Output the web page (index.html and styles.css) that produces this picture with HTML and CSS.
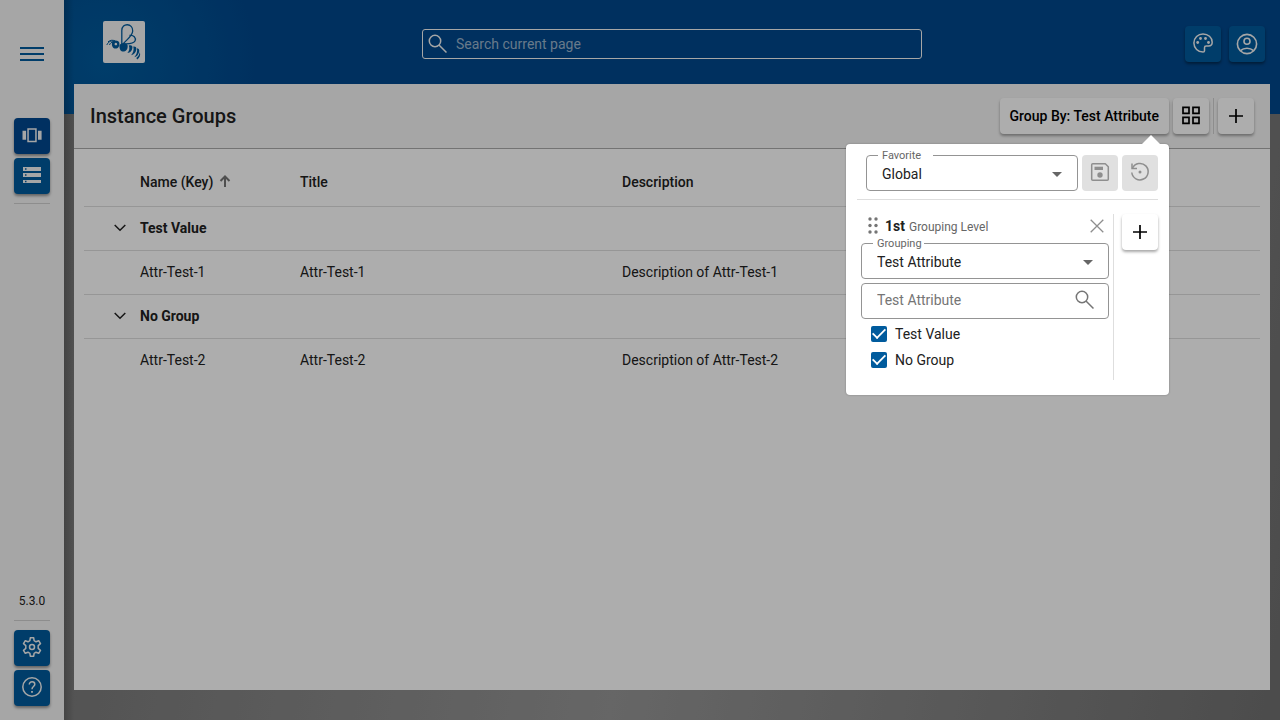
FILE: index.html
```html
<!DOCTYPE html>
<html lang="en">
<head>
<meta charset="utf-8">
<meta name="viewport" content="width=device-width, initial-scale=1">
<title>Instance Groups</title>
<link rel="stylesheet" href="styles.css">
</head>
<body>
<div class="app">
  <nav class="rail">
    <button class="menu" aria-label="Menu"><span></span><span></span><span></span></button>
    <div class="rail-group rail-top">
      <button class="tile tile-active" aria-label="Instance groups"><svg width="24" height="24" viewBox="0 0 24 24"><path fill="currentColor" fill-rule="evenodd" d="M2.500 7.700h3.600v9H2.500zM18 7.700h3.600v9H18zM7.300 5.200h9.400v14H7.300zM8.800 6.700v11h6.400v-11z"/></svg></button>
      <button class="tile" aria-label="Systems"><svg width="24" height="24" viewBox="0 0 24 24"><path fill="currentColor" fill-rule="evenodd" d="M3 4h18v4H3zM5 5.300v1.500h1.500V5.300zM3 10h18v4H3zM5 11.300v1.500h1.500v-1.500zM3 17h18v3H3zM5 17.800v1.400h1.500v-1.400z"/></svg></button>
    </div>
    <span class="version">5.3.0</span>
    <div class="rail-group rail-bottom">
      <button class="tile" aria-label="Settings"><svg width="24" height="24" viewBox="0 0 24 24" fill="none" stroke="currentColor" stroke-width="1.500" stroke-linejoin="round"><path d="M10.300 2.800h3.400l.4 2.900 1.900 1.100 2.700-1.100 1.800 3-2.300 1.900v2.800l2.300 1.900-1.800 3-2.700-1.100-1.900 1.100-.4 2.900h-3.400l-.4-2.900L8 17.200l-2.700 1.100-1.800-3 2.300-1.900v-2.800L3.500 8.700l1.800-3L8 6.800l1.900-1.100z"/><circle cx="12" cy="12" r="2.500"/></svg></button>
      <button class="tile" aria-label="Help"><svg width="24" height="24" viewBox="0 0 24 24" fill="none" stroke="currentColor" stroke-width="1.500"><circle cx="12" cy="12" r="9.200"/><path d="M9.300 9.600c0-1.800 1.200-2.900 2.800-2.900s2.700 1 2.700 2.500c0 2.300-2.800 2.300-2.800 5"/><path stroke-width="1.800" d="M12 16v1.800"/></svg></button>
    </div>
  </nav>

  <div class="shell">
    <header class="topbar">
      <svg class="logo" viewBox="0 0 42 42" width="42" height="42"><rect width="42" height="42" rx="2" fill="#f5f5f5"/><g fill="none" stroke="#005b9d" stroke-width="1.300"><path d="M18.800 24V9.500C18.800 1.500 30 2 29.700 10c-.2 5-5.500 8-9.700 13"/><path d="M26.500 14.500c4-1 7 2.500 5.500 5.500-1.500 3-7 2.700-11 3"/><path stroke-width="1" d="M3.800 24c1.500-3.300 4-4.600 7.500-3.600M6.500 24c.5-1.800 2-3 4-2.800M5 20.800c2-1.600 4.500-2 7-1"/></g><g fill="#005b9d"><path fill-rule="evenodd" d="M9.500 20.500c2.500-1.600 6-1.200 6.800 1.200.6 3.300-1.300 6-3.800 5.900C9.500 27.500 8 24 9.500 20.500zm3.300 1.200a1.300 1.300 0 1 0 .1 0z"/><path d="M16.500 24c1.500-2.500 7-2.500 8 0 .7 3-.8 6-3.500 6.500s-5-1.700-4.500-6.500z"/><path d="M25.800 24.500c2.600-.6 4 .2 3.600 2.500-.5 3-2 4.500-5 5 2-2.500 2.500-4.600 1.400-7.500zM30.300 25.500c2.500-.2 3.500 1 3 3.300-.6 2.900-2.200 4.700-5.200 5.500 2.200-2.700 3-5.300 2.200-8.800zM34 27.300c2 .5 2.700 1.700 2.100 3.800-.7 2.700-2.200 4.600-4.800 5.200 2.200-2.500 3.200-5.300 2.700-9zM36.800 31c1 3-.1 6-2.500 7.500l-1-1.500c1.900-1.500 3-3.300 3.500-6z"/></g></svg>
      <label class="search"><svg width="24" height="24" viewBox="0 0 24 24" fill="none" stroke="currentColor" stroke-width="1.500"><circle cx="9" cy="9" r="5.700"/><path d="M13 13l7.500 7.500"/></svg><input type="search" placeholder="Search current page" aria-label="Search current page"></label>
      <div class="top-actions">
        <button class="tile" aria-label="Theme"><svg width="24" height="24" viewBox="0 0 24 24"><path fill="none" stroke="currentColor" stroke-width="1.500" d="M12 2.900a9.100 9.100 0 1 0 0 18.200c1.200 0 1.500-.6 1.500-1.300v-3.100c0-1 .7-1.700 1.700-1.700h2.400c2.300 0 3.600-1.500 3.600-3.700 0-4.900-4.100-8.400-9.200-8.400z"/><g fill="currentColor"><circle cx="6.700" cy="11.500" r="1.400"/><circle cx="9.500" cy="7.500" r="1.400"/><circle cx="14.500" cy="7.500" r="1.400"/><circle cx="17.500" cy="11.500" r="1.400"/></g></svg></button>
        <button class="tile" aria-label="Account"><svg width="24" height="24" viewBox="0 0 24 24" fill="none" stroke="currentColor" stroke-width="1.600"><circle cx="12" cy="13" r="9.600"/><circle cx="12" cy="10.200" r="3"/><path d="M5.500 19.700c3.500-3.300 9.500-3.300 13 0"/></svg></button>
      </div>
    </header>

    <main class="page">
      <div class="page-head">
        <h1>Instance Groups</h1>
        <div class="page-actions">
          <div class="group-anchor">
            <button class="raised group-by">Group By: Test Attribute</button>
            <section class="popover" aria-label="Grouping">
              <div class="fav-row">
                <fieldset class="field"><legend><label for="fav">Favorite</label></legend><select id="fav"><option>Global</option></select></fieldset>
                <button class="square" disabled aria-label="Save"><svg width="24" height="24" viewBox="0 0 24 24"><path fill="none" stroke="currentColor" stroke-width="1.500" stroke-linejoin="round" d="M4.700 3.700h12.600l3 3v12.600q0 1-1 1H4.700q-1 0-1-1V4.700q0-1 1-1z"/><path fill="currentColor" d="M6.500 6.700h8.500v3.300H6.500z"/><circle cx="12" cy="15" r="2.700" fill="currentColor"/></svg></button>
                <button class="square" disabled aria-label="Restore"><svg width="24" height="24" viewBox="0 0 24 24" fill="none" stroke="currentColor" stroke-width="1.500"><path d="M4 3.500v5h5"/><path d="M4.600 8a8.200 8.200 0 1 1-.8 4.500"/><circle cx="12" cy="12" r="1.500" fill="currentColor" stroke="none"/></svg></button>
              </div>
              <div class="levels">
                <div class="level">
                  <div class="level-head">
                    <svg class="drag" width="10" height="18" viewBox="0 0 10 18" fill="currentColor"><circle cx="2" cy="2" r="1.700"/><circle cx="8" cy="2" r="1.700"/><circle cx="2" cy="8.500" r="1.700"/><circle cx="8" cy="8.500" r="1.700"/><circle cx="2" cy="15" r="1.700"/><circle cx="8" cy="15" r="1.700"/></svg>
                    <strong>1st</strong><span class="caption">Grouping Level</span>
                    <button class="close" aria-label="Remove level"><svg width="14" height="14" viewBox="0 0 14 14" stroke="currentColor" stroke-width="1.300"><path d="M.7.7l12.600 12.600M13.300.7L.7 13.300"/></svg></button>
                  </div>
                  <fieldset class="field"><legend><label for="grp">Grouping</label></legend><select id="grp"><option>Test Attribute</option></select></fieldset>
                  <label class="filter"><input type="text" placeholder="Test Attribute" aria-label="Filter Test Attribute"><svg width="24" height="24" viewBox="0 0 24 24" fill="none" stroke="currentColor" stroke-width="1.500"><circle cx="9" cy="9" r="5.700"/><path d="M13 13l7.500 7.500"/></svg></label>
                  <label class="check"><input type="checkbox" checked><span>Test Value</span></label>
                  <label class="check"><input type="checkbox" checked><span>No Group</span></label>
                </div>
                <button class="raised icon-btn" aria-label="Add level"><svg width="24" height="24" viewBox="0 0 24 24" stroke="currentColor" stroke-width="1.700"><path d="M12 5v14M5 12h14"/></svg></button>
              </div>
            </section>
          </div>
          <button class="raised icon-btn" aria-label="Card view"><svg width="24" height="24" viewBox="0 0 24 24" fill="none" stroke="currentColor" stroke-width="1.700"><path d="M4 3.300h6v6H4zM14 3.300h6v6h-6zM4 13.300h6v6H4zM14 13.300h6v6h-6z"/></svg></button>
          <span class="divider"></span>
          <button class="raised icon-btn" aria-label="Add"><svg width="24" height="24" viewBox="0 0 24 24" stroke="currentColor" stroke-width="1.700"><path d="M12 5v14M5 12h14"/></svg></button>
        </div>
      </div>
      <div class="page-body">
        <table>
          <colgroup><col class="c-toggle"><col class="c-name"><col class="c-title"><col></colgroup>
          <thead><tr><th></th><th>Name (Key) <svg class="sort" width="12" height="12" viewBox="0 0 12 12" fill="none" stroke="currentColor" stroke-width="2"><path d="M6 12V2M1.500 6L6 1.500 10.500 6"/></svg></th><th>Title</th><th>Description</th></tr></thead>
          <tbody>
            <tr class="group"><td><button class="toggle" aria-label="Collapse Test Value"><svg width="12" height="8" viewBox="0 0 12 8" fill="none" stroke="currentColor" stroke-width="1.500"><path d="M.7 1L6 6.300 11.300 1"/></svg></button></td><td colspan="3">Test Value</td></tr>
            <tr><td></td><td>Attr-Test-1</td><td>Attr-Test-1</td><td>Description of Attr-Test-1</td></tr>
            <tr class="group"><td><button class="toggle" aria-label="Collapse No Group"><svg width="12" height="8" viewBox="0 0 12 8" fill="none" stroke="currentColor" stroke-width="1.500"><path d="M.7 1L6 6.300 11.300 1"/></svg></button></td><td colspan="3">No Group</td></tr>
            <tr><td></td><td>Attr-Test-2</td><td>Attr-Test-2</td><td>Description of Attr-Test-2</td></tr>
          </tbody>
        </table>
      </div>
    </main>
  </div>
  <div class="backdrop"></div>
</div>
</body>
</html>
```

FILE: styles.css
```css
* { box-sizing: border-box; }
body { margin: 0; font: 14px/20px Roboto, "Liberation Sans", sans-serif; color: #212121; }
button, input, select { font: inherit; color: inherit; }
button { border: 0; padding: 0; display: flex; align-items: center; justify-content: center; }
svg { display: block; flex: none; }
.app { position: relative; display: flex; min-height: 100vh; }
.backdrop { position: absolute; inset: 0; z-index: 1; background: rgba(0, 0, 0, .32); }

.rail { flex: none; width: 64px; padding: 36px 14px 14px; display: flex; flex-direction: column; align-items: center; background: #f5f5f5; }
.menu { width: 36px; height: 36px; background: none; flex-direction: column; gap: 4px; }
.menu span { width: 24px; height: 2px; background: #005b9d; }
.rail-group { width: 36px; display: flex; flex-direction: column; gap: 4px; }
.rail-top { margin-top: 46px; padding-bottom: 9px; border-bottom: 1px solid #d0d0d0; }
.rail-bottom { padding-top: 9px; border-top: 1px solid #d0d0d0; }
.version { margin-top: auto; margin-bottom: 9px; font-size: 12px; }
.tile { width: 36px; height: 36px; padding-bottom: 2px; border-radius: 4px; background: #005b9d; color: #f5f5f5; box-shadow: 0 2px 3px rgba(0, 0, 0, .4); }
.tile-active { background: #00478f; }

.shell {
  flex: 1;
  min-width: 0;
  display: flex;
  flex-direction: column;
  padding: 0 10px 30px;
  background:
    linear-gradient(90deg, rgba(0, 0, 0, .18), transparent 10px),
    radial-gradient(circle at 40px 60px, #005b9d, #00478c 160px) 0 0 / 100% 114px no-repeat,
    linear-gradient(100deg, #757575, #979797 50%, #707070);
}
.topbar { height: 84px; display: grid; grid-template-columns: 1fr 500px 1fr; align-items: center; padding: 4px 5px 0; }
.logo { margin: 0 0 4px 24px; }
.search { display: flex; align-items: center; height: 30px; padding-left: 3px; gap: 6px; border: 1px solid #f5f5f5; border-radius: 3px; color: #f5f5f5; }
.search input { flex: 1; min-width: 0; border: 0; padding: 0; background: none; outline: 0; }
.search input::placeholder { color: #9ab4cc; }
.top-actions { display: flex; justify-content: flex-end; gap: 8px; }

.page { flex: 1; display: flex; flex-direction: column; background: #fff; }
.page-head { display: flex; align-items: center; justify-content: space-between; height: 65px; padding: 0 16px; background: #f5f5f5; border-bottom: 1px solid #aaa; }
h1 { margin: 0; font-size: 20px; line-height: 32px; font-weight: 500; }
.page-actions { display: flex; gap: 4px; }
.divider { width: 1px; background: #d0d0d0; }
.raised { height: 36px; border-radius: 4px; background: #fff; color: #000; box-shadow: 0 2px 3px rgba(0, 0, 0, .35); }
.icon-btn { width: 36px; }
.group-anchor { position: relative; }
.group-by { padding: 0 10px; font-weight: 500; white-space: nowrap; }

.page-body { padding: 10px; }
table { width: 100%; border-collapse: collapse; table-layout: fixed; }
.c-toggle { width: 56px; }
.c-name { width: 160px; }
.c-title { width: 322px; }
th, td { padding: 0; text-align: left; height: 44px; }
th { height: 47px; font-weight: 500; }
tr:not(:last-child), thead tr { border-bottom: 1px solid #dedede; }
.group td { font-weight: 700; }
.sort { display: inline-block; margin-left: 2px; color: #757575; }
.toggle { margin-left: 26px; width: 20px; height: 20px; background: none; }

.popover { position: absolute; z-index: 2; top: 46px; right: 0; width: 323px; padding: 11px 11px 15px; background: #fff; border-radius: 4px; box-shadow: 0 0 2px rgba(0, 0, 0, .3); }
.popover::before { content: ""; position: absolute; top: -9px; right: 9px; border: 9px solid transparent; border-top: 0; border-bottom-color: #fff; }
.fav-row { display: flex; gap: 4px; padding: 0 0 8px 9px; border-bottom: 1px solid #dedede; }
.field { position: relative; flex: 1; min-width: 0; height: 42px; margin: -6px 0 0; padding: 0; border: 1px solid #949494; border-radius: 4px; }
.field legend { margin-left: 11px; padding: 0 12px 0 4px; height: 12px; font-size: 11px; line-height: 14px; color: #666; }
.field select { display: block; width: 100%; height: 26px; padding: 0 15px; border: 0; background: none; appearance: none; outline: 0; }
.field::after { content: ""; position: absolute; right: 15px; top: 11px; border: 5px solid transparent; border-top-color: #666; border-bottom: 0; }
.square { width: 36px; height: 36px; padding-bottom: 2px; border-radius: 4px; background: #e0e0e0; color: #8e8e8e; }
.levels { display: flex; gap: 8px; padding-top: 14px; }
.level { flex: 1; min-width: 0; margin-left: 4px; padding-right: 4px; min-height: 166px; border-right: 1px solid #dedede; }
.level-head { display: flex; align-items: center; height: 24px; padding: 0 5px 0 7px; gap: 4px; margin-bottom: 5px; }
.drag { margin-right: 3px; color: #757575; }
.level-head strong { font-weight: 700; }
.caption { padding-top: 2px; font-size: 12px; color: #666; }
.close { margin-left: auto; background: none; color: #8e8e8e; }
.level .field legend { padding-right: 2px; }
.filter { display: flex; align-items: center; height: 36px; margin: 4px 0 2px; padding: 0 11px 2px 15px; border: 1px solid #949494; border-radius: 4px; color: #757575; }
.filter input { flex: 1; min-width: 0; padding: 0; border: 0; background: none; outline: 0; }
.filter input::placeholder { color: #757575; }
.check { display: flex; align-items: center; gap: 8px; height: 26px; padding-left: 10px; }
.check input { appearance: none; margin: 0; width: 16px; height: 16px; border-radius: 2px; background: #005b9d; display: grid; place-items: center; }
.check input:checked::after { content: ""; width: 12px; height: 6px; margin-bottom: 4px; border: solid #fff; border-width: 0 0 2px 2px; transform: rotate(-45deg) scale(.9); }
```
